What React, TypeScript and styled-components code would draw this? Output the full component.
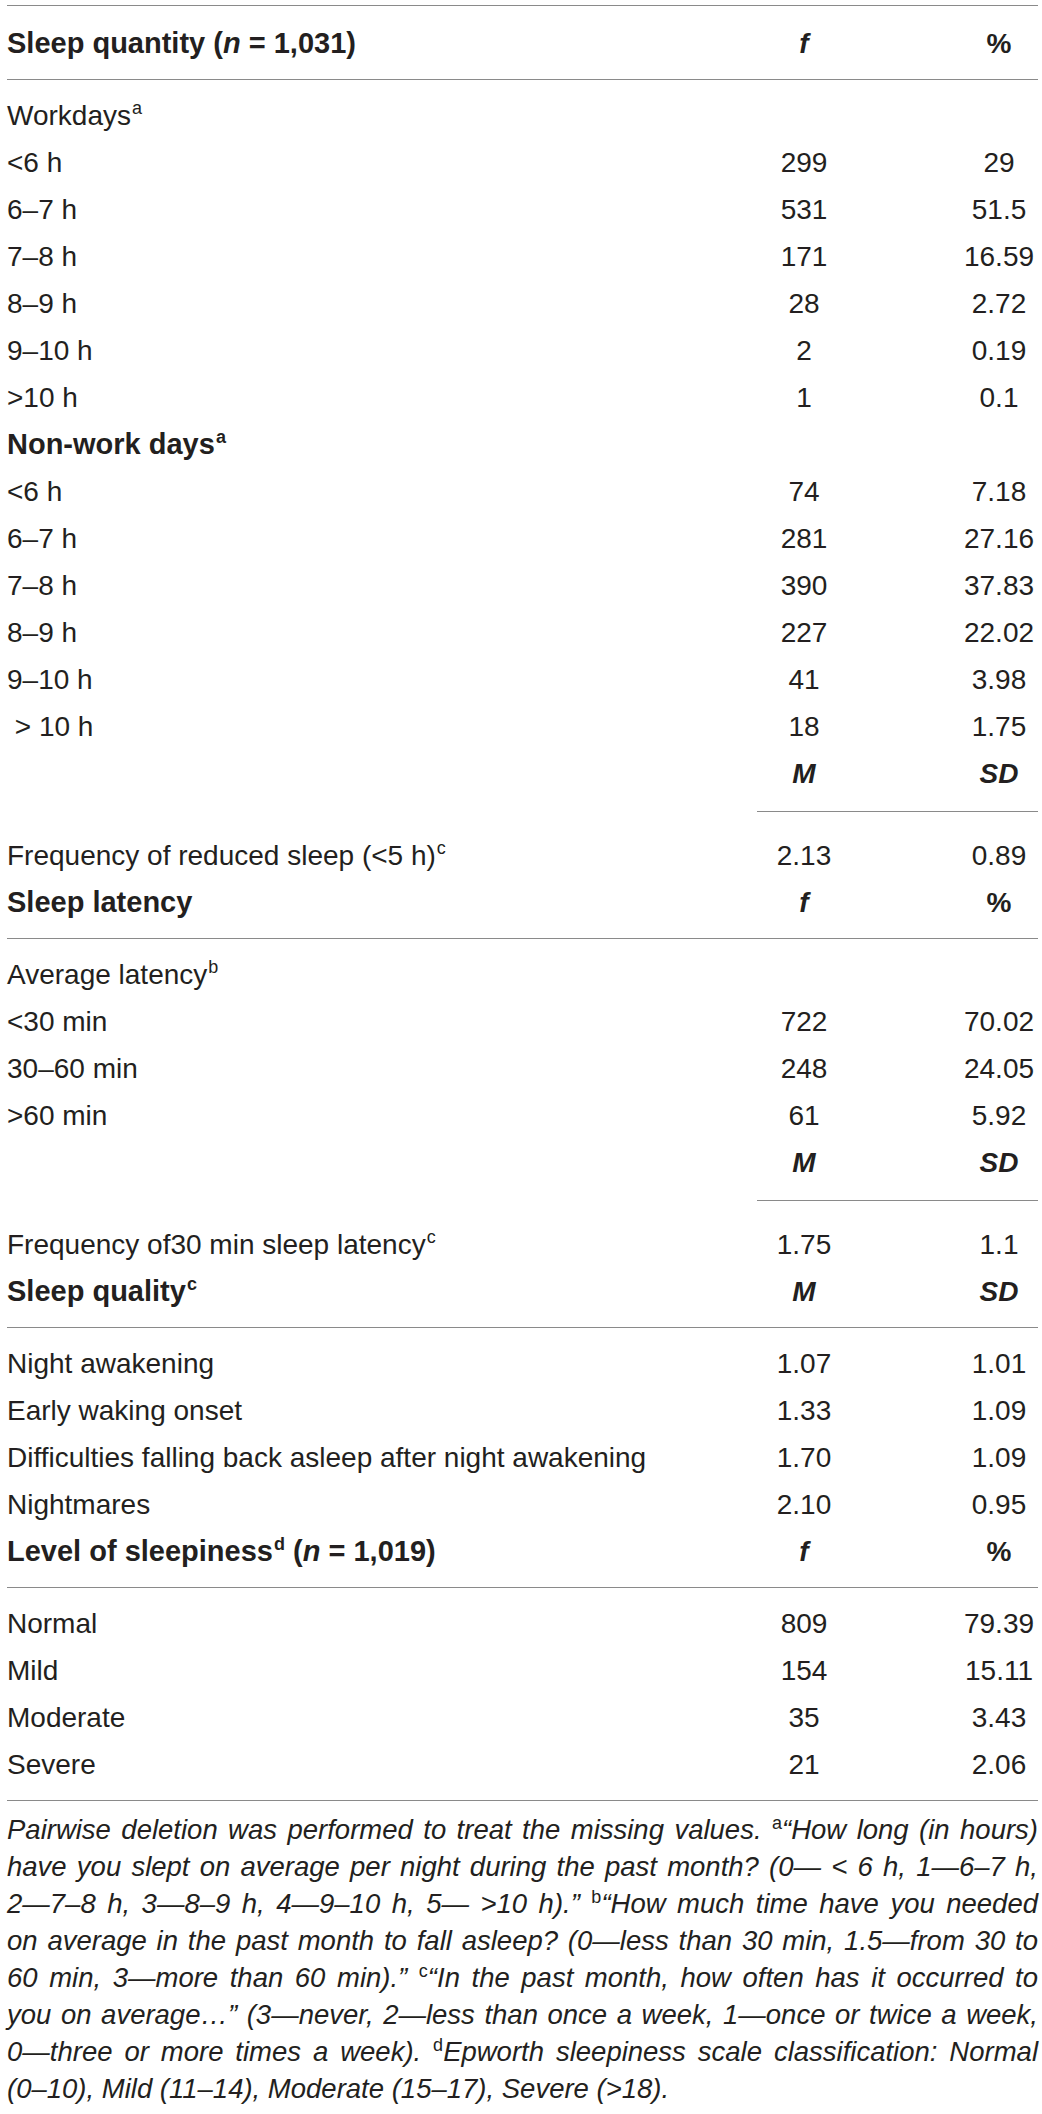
import React from 'react';
import styled, { createGlobalStyle } from 'styled-components';

const GlobalStyle = createGlobalStyle`
  html, body {
    margin: 0;
    padding: 0;
    background: #ffffff;
  }

  body {
    font-family: 'Liberation Sans', Arial, Helvetica, sans-serif;
    color: #231f20;
  }
`;

interface RowProps {
  label: React.ReactNode;
  f?: React.ReactNode;
  pct?: React.ReactNode;
  head?: boolean;
  italicValues?: boolean;
}

const TableRow = ({ label, f, pct, head, italicValues }: RowProps) => (
  <Row>
    <Label $bold={head}>{label}</Label>
    {f !== undefined && (
      <Value $col={2} $bold={head} $italic={italicValues}>
        {f}
      </Value>
    )}
    {pct !== undefined && (
      <Value $col={4} $bold={head} $italic={italicValues}>
        {pct}
      </Value>
    )}
  </Row>
);

const StatRow = () => <TableRow label="" f="M" pct="SD" head italicValues />;

const workdays = [
  ['<6 h', '299', '29'],
  ['6–7 h', '531', '51.5'],
  ['7–8 h', '171', '16.59'],
  ['8–9 h', '28', '2.72'],
  ['9–10 h', '2', '0.19'],
  ['>10 h', '1', '0.1'],
];

const nonWorkdays = [
  ['<6 h', '74', '7.18'],
  ['6–7 h', '281', '27.16'],
  ['7–8 h', '390', '37.83'],
  ['8–9 h', '227', '22.02'],
  ['9–10 h', '41', '3.98'],
  ['\u00a0> 10 h', '18', '1.75'],
];

const latency = [
  ['<30 min', '722', '70.02'],
  ['30–60 min', '248', '24.05'],
  ['>60 min', '61', '5.92'],
];

const quality = [
  ['Night awakening', '1.07', '1.01'],
  ['Early waking onset', '1.33', '1.09'],
  ['Difficulties falling back asleep after night awakening', '1.70', '1.09'],
  ['Nightmares', '2.10', '0.95'],
];

const sleepiness = [
  ['Normal', '809', '79.39'],
  ['Mild', '154', '15.11'],
  ['Moderate', '35', '3.43'],
  ['Severe', '21', '2.06'],
];

const renderRows = (rows: string[][]) =>
  rows.map(([label, f, pct]) => (
    <TableRow key={label + f} label={label} f={f} pct={pct} />
  ));

const App = () => {
  return (
    <>
      <GlobalStyle />
      <Table>
        <Rule />
        <Block $top={14} $bottom={12}>
          <TableRow
            head
            label={
              <>
                Sleep quantity (<i>n</i> = 1,031)
              </>
            }
            f={<i>f</i>}
            pct="%"
          />
        </Block>
        <Rule />
        <Block $top={12} $bottom={14}>
          <TableRow
            label={
              <>
                Workdays<Sup>a</Sup>
              </>
            }
          />
          {renderRows(workdays)}
          <TableRow
            head
            label={
              <>
                Non-work days<Sup>a</Sup>
              </>
            }
          />
          {renderRows(nonWorkdays)}
          <StatRow />
        </Block>
        <Rule $partial />
        <Block $top={20} $bottom={12}>
          <TableRow
            label={
              <>
                Frequency of reduced sleep (&lt;5 h)<Sup>c</Sup>
              </>
            }
            f="2.13"
            pct="0.89"
          />
          <TableRow head label="Sleep latency" f={<i>f</i>} pct="%" />
        </Block>
        <Rule />
        <Block $top={12} $bottom={14}>
          <TableRow
            label={
              <>
                Average latency<Sup>b</Sup>
              </>
            }
          />
          {renderRows(latency)}
          <StatRow />
        </Block>
        <Rule $partial />
        <Block $top={20} $bottom={12}>
          <TableRow
            label={
              <>
                Frequency of30 min sleep latency<Sup>c</Sup>
              </>
            }
            f="1.75"
            pct="1.1"
          />
          <TableRow
            head
            italicValues
            label={
              <>
                Sleep quality<Sup>c</Sup>
              </>
            }
            f="M"
            pct="SD"
          />
        </Block>
        <Rule />
        <Block $top={12} $bottom={12}>
          {renderRows(quality)}
          <TableRow
            head
            label={
              <>
                Level of sleepiness<Sup>d</Sup> (<i>n</i> = 1,019)
              </>
            }
            f={<i>f</i>}
            pct="%"
          />
        </Block>
        <Rule />
        <Block $top={12} $bottom={12}>
          {renderRows(sleepiness)}
        </Block>
        <Rule />
        <Footnote>
          <FootLine>
            Pairwise deletion was performed to treat the missing values.{' '}
            <FootSup>a</FootSup>“How long (in hours)
          </FootLine>
          <FootLine>
            have you slept on average per night during the past month? (0— &lt; 6 h, 1—6–7 h,
          </FootLine>
          <FootLine>
            2—7–8 h, 3—8–9 h, 4—9–10 h, 5— &gt;10 h).” <FootSup>b</FootSup>“How much time have
            you needed
          </FootLine>
          <FootLine>
            on average in the past month to fall asleep? (0—less than 30 min, 1.5—from 30 to
          </FootLine>
          <FootLine>
            60 min, 3—more than 60 min).” <FootSup>c</FootSup>“In the past month, how often has
            it occurred to
          </FootLine>
          <FootLine>
            you on average…” (3—never, 2—less than once a week, 1—once or twice a week,
          </FootLine>
          <FootLine>
            0—three or more times a week). <FootSup>d</FootSup>Epworth sleepiness scale
            classification: Normal
          </FootLine>
          <FootLine $last>(0–10), Mild (11–14), Moderate (15–17), Severe (&gt;18).</FootLine>
        </Footnote>
      </Table>
    </>
  );
};

export default App;

const Table = styled.div`
  width: 1031px;
  margin: 0 4px 0 7px;
  padding-top: 5px;
`;

const Rule = styled.div<{ $partial?: boolean }>`
  height: 0;
  border-top: 1px solid #8a8a8a;
  margin-left: ${({ $partial }) => ($partial ? '750px' : '0')};
`;

const Block = styled.div<{ $top: number; $bottom: number }>`
  padding-top: ${({ $top }) => $top}px;
  padding-bottom: ${({ $bottom }) => $bottom}px;
`;

const Row = styled.div`
  display: grid;
  grid-template-columns: 1fr 94px 109px 78px;
  align-items: center;
  height: 47px;

  font-size: 28px;
  line-height: 47px;
`;

const Label = styled.div<{ $bold?: boolean }>`
  grid-column: 1;
  white-space: nowrap;
  font-size: ${({ $bold }) => ($bold ? '29px' : '28px')};
  font-weight: ${({ $bold }) => ($bold ? 700 : 400)};
`;

const Value = styled.div<{ $col: number; $bold?: boolean; $italic?: boolean }>`
  grid-column: ${({ $col }) => $col};
  text-align: center;
  white-space: nowrap;
  font-weight: ${({ $bold }) => ($bold ? 700 : 400)};
  font-style: ${({ $italic }) => ($italic ? 'italic' : 'normal')};
`;

const Sup = styled.sup`
  font-size: 18px;
  line-height: 0;
  vertical-align: 11px;
  margin-left: 1px;
`;

const Footnote = styled.div`
  padding-top: 10px;

  font-size: 27.5px;
  line-height: 37px;
  font-style: italic;
`;

const FootLine = styled.div<{ $last?: boolean }>`
  text-align: ${({ $last }) => ($last ? 'left' : 'justify')};
  text-align-last: ${({ $last }) => ($last ? 'left' : 'justify')};
`;

const FootSup = styled.sup`
  font-style: normal;
  font-size: 18px;
  line-height: 0;
  vertical-align: 10px;
`;
